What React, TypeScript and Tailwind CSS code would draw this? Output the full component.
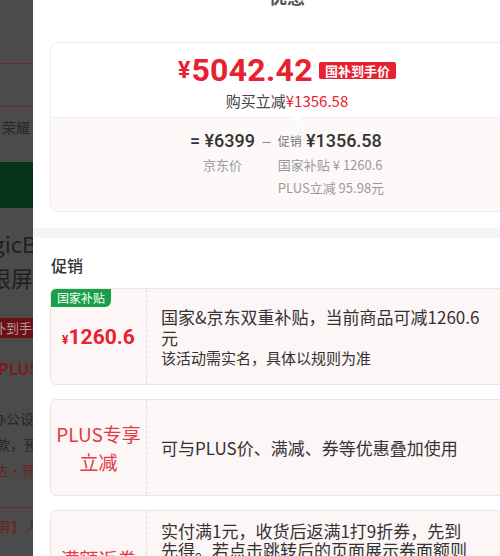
const cjk = "font-['Noto_Sans_CJK_SC','Noto_Sans',sans-serif]";
const num = "font-['Roboto','Noto_Sans_CJK_SC',sans-serif]";

function Backdrop() {
  return (
    <div className="flex w-[33px] shrink-0 flex-col overflow-hidden bg-[#4b4b4b] text-[#262626]">
      <div className="h-[63px] shrink-0" />
      <div className="h-px shrink-0 bg-[#6a2c2c]" />
      <div className="h-[42px] shrink-0" />
      <div className="h-px shrink-0 bg-[#6a2c2c]" />
      <div className="h-[55px] shrink-0 pt-[10px] pl-[2px] text-[14px] leading-[20px] whitespace-nowrap">荣耀</div>
      <div className="h-[46px] shrink-0 bg-[#07351a]" />
      <div className="h-[21px] shrink-0" />
      <div className="-ml-[38px] h-[28px] shrink-0 text-[22px] leading-[28px] whitespace-nowrap text-[#1f1f1f]">MagicBook</div>
      <div className="-ml-[33px] mt-[6px] h-[28px] shrink-0 text-[22px] leading-[28px] whitespace-nowrap text-[#1f1f1f]">无限屏幕</div>
      <div className="mt-[27px] flex h-[20px] shrink-0 items-center bg-[#6b0f14]">
        <span className="-ml-[20px] text-[13px] leading-[20px] whitespace-nowrap text-[#b59a9a]">国补到手价</span>
      </div>
      <div className="-ml-[2px] mt-[20px] h-[20px] shrink-0 text-[16px] font-bold leading-[20px] whitespace-nowrap text-[#7a1c1c]">PLUS</div>
      <div className="-ml-[8px] mt-[30px] h-[20px] shrink-0 text-[14px] leading-[20px] whitespace-nowrap">办公设计</div>
      <div className="-ml-[4px] mt-[6px] h-[20px] shrink-0 text-[14px] leading-[20px] whitespace-nowrap">款，预约</div>
      <div className="-ml-[6px] mt-[6px] h-[20px] shrink-0 text-[14px] leading-[20px] whitespace-nowrap text-[#6b2424]">达·预约</div>
      <div className="mt-[27px] h-px shrink-0 bg-[#6a2c2c]" />
      <div className="-ml-[3px] mt-[8px] h-[20px] shrink-0 text-[14px] leading-[20px] whitespace-nowrap text-[#6b2424]">屏】人</div>
    </div>
  );
}

function PriceCard() {
  return (
    <div className="ml-[17px] w-[474px] overflow-hidden rounded-[8px] border border-[#ebebeb]">
      <div className="relative flex flex-col items-center bg-white pt-[11px] pb-[6px]">
        <div className="flex h-[32px] items-center">
          <span className={`${num} text-[23px] font-bold leading-none text-[#e8202f]`}>¥</span>
          <span className={`${num} ml-[1px] text-[32px] font-bold leading-none tracking-[0.3px] text-[#e8202f]`}>5042.42</span>
          <span className="ml-[6px] rounded-[2px] bg-[#e8202f] px-[6px] text-[13px] font-bold leading-[17px] text-white">国补到手价</span>
        </div>
        <div className="mt-[5px] text-[15px] leading-[20px] text-[#444]">
          购买立减<span className="text-[#e8202f]">¥1356.58</span>
        </div>
        <div className="absolute -bottom-[4px] left-[241px] h-0 w-0 border-x-[5px] border-t-[5px] border-x-transparent border-t-white" />
      </div>
      <div className="flex justify-center gap-[7px] border-t border-[#f6eeee] bg-[#fdf9f9] pt-[11px] pb-[13px]">
        <div className="flex flex-col items-center">
          <div className={`${num} text-[18px] font-medium leading-[24px] text-[#333]`}>= ¥6399</div>
          <div className="mt-[2px] text-[13px] leading-[20px] text-[#999]">京东价</div>
        </div>
        <div className="text-[16px] leading-[24px] text-[#888]">−</div>
        <div className="flex flex-col">
          <div className="flex items-center leading-[24px]">
            <span className="text-[12px] text-[#777]">促销</span>
            <span className={`${num} ml-[4px] text-[18px] font-medium text-[#333]`}>¥1356.58</span>
          </div>
          <div className="mt-[2px] text-[13px] leading-[20px] text-[#999]">国家补贴 ¥ 1260.6</div>
          <div className="mt-[3px] text-[13px] leading-[20px] text-[#999]">PLUS立减 95.98元</div>
        </div>
      </div>
    </div>
  );
}

type Promo = { left: React.ReactNode; badge?: string; text: React.ReactNode };

function PromoCard({ left, badge, text }: Promo) {
  return (
    <div className="relative ml-[17px] mb-[14px] flex h-[97px] w-[474px] overflow-hidden rounded-[6px] border border-[#f4e1e1] bg-[#fdf6f6]">
      {badge && (
        <div className="absolute top-0 left-0 rounded-br-[6px] bg-[#18a048] px-[6px] text-[12px] leading-[18px] text-white">{badge}</div>
      )}
      <div className="flex w-[96px] shrink-0 items-center justify-center border-r border-dashed border-[#ead6d6]">{left}</div>
      <div className="flex flex-1 items-center pl-[14px] pr-[33px] text-[17px] leading-[21px] text-[#333]">{text}</div>
    </div>
  );
}

export default function App() {
  return (
    <div className={`${cjk} flex h-[556px] w-[500px] overflow-hidden bg-[#4b4b4b]`}>
      <Backdrop />
      <div className="w-[508px] shrink-0 bg-white">
        <div className="h-[42px] overflow-hidden">
          <div className="-mt-[16px] text-center text-[18px] font-bold leading-[24px] text-[#555]">优惠</div>
        </div>
        <PriceCard />
        <div className="mt-[16px] h-[10px] bg-[#f4f5f7]" />
        <div className="px-[18px] pt-[15px] pb-[11px] text-[16px] font-medium leading-[24px] text-[#333]">促销</div>
        <PromoCard
          badge="国家补贴"
          left={
            <div className={`${num} pt-[2px] font-bold text-[#e8202f]`}>
              <span className="text-[12px]">¥</span>
              <span className="text-[21px]">1260.6</span>
            </div>
          }
          text={
            <div>
              <div>国家&amp;京东双重补贴，当前商品可减1260.6元</div>
              <div className="text-[15px] leading-[20px]">该活动需实名，具体以规则为准</div>
            </div>
          }
        />
        <PromoCard
          left={<div className="text-center text-[19px] leading-[28px] text-[#e23b41]">PLUS专享<br />立减</div>}
          text={<div>可与PLUS价、满减、券等优惠叠加使用</div>}
        />
        <PromoCard
          left={<div className="text-center text-[19px] leading-[28px] text-[#e23b41]">满额返券</div>}
          text={
            <div className="leading-[19px] whitespace-nowrap">
              实付满1元，收货后返满1打9折券，先到<br />
              先得。若点击跳转后的页面展示券面额则<br />
              以页面展示为准，具体以活动规则为准，<br />
              详情请查看活动页面
            </div>
          }
        />
      </div>
    </div>
  );
}
